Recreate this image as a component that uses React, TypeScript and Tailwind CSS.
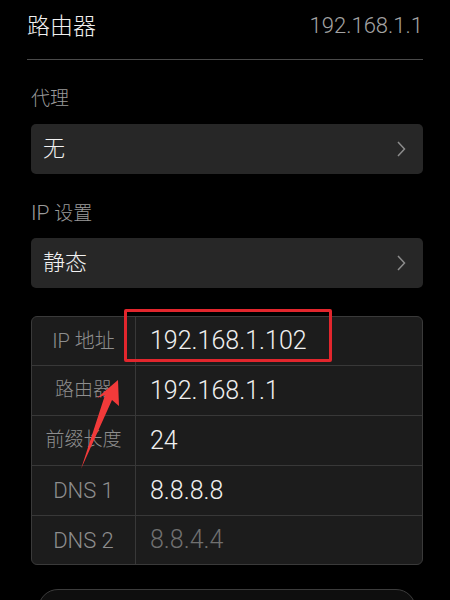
import React from "react";

const font = "font-['Roboto','Noto_Sans_CJK_SC',sans-serif] font-light";

function Chevron() {
  return (
    <svg width="9" height="16" viewBox="0 0 9 16" fill="none">
      <polyline points="1,1 7.5,8 1,15" stroke="#8c8c8c" strokeWidth="1.5" />
    </svg>
  );
}

function SelectBox({ value }: { value: string }) {
  return (
    <div className="mt-[13px] h-[50px] rounded-[5px] bg-[#272727] flex items-center justify-between pl-[12px] pr-[17px]">
      <span className="text-[22px] text-[#f2f2f2] leading-none">{value}</span>
      <Chevron />
    </div>
  );
}

const rows = [
  { label: "IP 地址", value: "192.168.1.102", h: "h-[48px]", size: "text-[20px]", dim: false },
  { label: "路由器", value: "192.168.1.1", h: "h-[50px]", size: "text-[19px]", dim: false },
  { label: "前缀长度", value: "24", h: "h-[50px]", size: "text-[19px]", dim: false },
  { label: "DNS 1", value: "8.8.8.8", h: "h-[50px]", size: "text-[22px]", dim: false },
  { label: "DNS 2", value: "8.8.4.4", h: "h-[49px]", size: "text-[22px]", dim: true },
];

export default function App() {
  return (
    <div className={`relative w-[450px] h-[600px] overflow-hidden bg-black ${font}`}>
      {/* Header */}
      <div className="mx-[27px] h-[52px] flex items-center justify-between">
        <span className="text-[23px] text-[#f0f0f0] leading-none">路由器</span>
        <span className="text-[22px] text-[#a3a3a3] leading-none">192.168.1.1</span>
      </div>
      <div className="mx-[27px] mt-[7px] h-px bg-[#4a4a4a]" />

      <div className="ml-[31px] mr-[27px]">
        {/* Proxy */}
        <div className="mt-[27px] h-[24px] leading-[24px] text-[19px] text-[#9a9a9a]">代理</div>
        <SelectBox value="无" />

        {/* IP settings */}
        <div className="mt-[27px] h-[24px] leading-[24px] text-[19px] text-[#9a9a9a]">
          <span className="text-[21px]">IP</span> 设置
        </div>
        <SelectBox value="静态" />

        {/* Static IP table */}
        <div className="mt-[28px] rounded-[6px] border border-[#3a3a3a] bg-[#1c1c1c] overflow-hidden">
          {rows.map((r, i) => (
            <div
              key={r.label}
              className={`flex ${r.h} ${i > 0 ? "border-t border-[#383838]" : ""}`}
            >
              <div
                className={`w-[104px] shrink-0 flex items-center justify-center border-r border-[#383838] ${r.size} text-[#8e8e8e]`}
              >
                {r.label}
              </div>
              <div
                className={`flex-1 flex items-center pl-[14px] text-[25px] ${
                  r.dim ? "text-[#707070]" : "text-[#f0f0f0]"
                }`}
              >
                {r.value}
              </div>
            </div>
          ))}
        </div>
      </div>

      {/* next card peeking at the bottom */}
      <div className="mt-[24px] ml-[38px] mr-[34px] h-[40px] rounded-[20px] border border-[#3c3c3c] bg-[#0e0e0e]" />

      {/* annotation: red highlight box */}
      <div className="absolute left-[124px] top-[309px] w-[208px] h-[53px] border-[3px] border-[#e2262d] rounded-[2px]" />

      {/* annotation: red arrow */}
      <svg className="absolute left-0 top-0" width="450" height="600" viewBox="0 0 450 600">
        <polygon
          points="118,380 119,406 112,400 81,469 105,395 97,398"
          fill="#f23a3a"
        />
      </svg>
    </div>
  );
}
